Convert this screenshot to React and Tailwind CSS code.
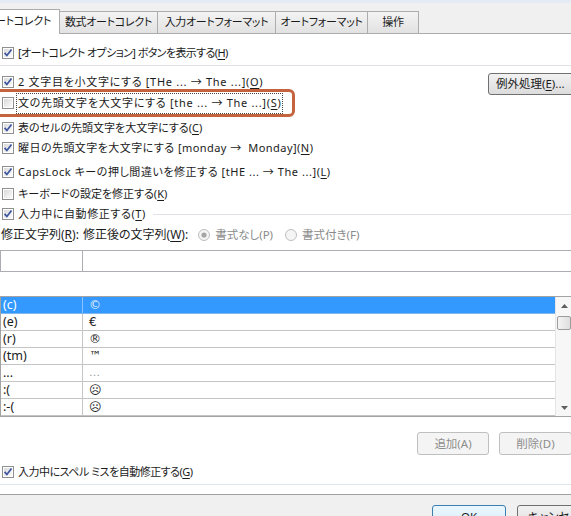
import React from 'react';

const Box = ({ on }) => (
  <svg width="12" height="12" viewBox="0 0 12 12" className="shrink-0">
    <defs>
      <linearGradient id="cbfill" x1="0" y1="0" x2="1" y2="1">
        <stop offset="0" stopColor="#d9d9d9" />
        <stop offset="1" stopColor="#fbfbfb" />
      </linearGradient>
    </defs>
    <rect x="0.5" y="0.5" width="11" height="11" fill="#fff" stroke="#8e8f8f" />
    <rect x="2" y="2" width="8" height="8" fill="url(#cbfill)" />
    {on && <path d="M2.6 5.9 L4.9 8.5 L9.5 2.6" fill="none" stroke="#3b549e" strokeWidth="1.7" />}
  </svg>
);

const Radio = ({ on }) => (
  <svg width="12" height="12" viewBox="0 0 12 12" className="shrink-0">
    <circle cx="6" cy="6" r="5.5" fill="#f5f5f5" stroke="#bdbdbd" />
    {on && <circle cx="6" cy="6" r="2.6" fill="#a6a6a6" />}
  </svg>
);

const K = ({ children }) => <span className="underline underline-offset-2">{children}</span>;

const Opt = ({ on, className = '', t = '', children }) => (
  <div className={`flex items-center gap-[4px] pl-[2px] h-[20px] ${className}`}>
    <Box on={on} />
    <span className={`whitespace-nowrap ${t}`}>{children}</span>
  </div>
);

const Tab = ({ w, children }) => (
  <div
    className={`${w} h-[23px] shrink-0 flex items-center justify-center border-t border-r border-b border-[#acacac] bg-gradient-to-b from-[#f3f3f3] to-[#e2e2e2] whitespace-nowrap`}
  >
    {children}
  </div>
);

const entries = [
  ['(c)', '©'],
  ['(e)', '€'],
  ['(r)', '®'],
  ['(tm)', '™'],
  ['...', '…'],
  [':(', '☹'],
  [':-(', '☹'],
];

const Arrow = ({ down }) => (
  <svg width="7" height="4" viewBox="0 0 7 4">
    <path d={down ? 'M0 0 H7 L3.5 4 Z' : 'M0 4 H7 L3.5 0 Z'} fill="#5f5f5f" />
  </svg>
);

export default function App() {
  return (
    <div className="w-[571px] h-[516px] overflow-hidden bg-white text-[#1b1b1b] text-[11px] font-['Noto_Sans','Noto_Sans_CJK_JP',sans-serif] [font-feature-settings:'palt']">
      {/* tab strip */}
      <div className="h-[34px] bg-[#f0f0f0]">
        <div className="h-[3px] bg-[#e4ebf4]" />
        <div className="flex items-end h-[31px] text-[11px] tracking-[-0.3px]">
          <div className="w-[60px] h-[25px] shrink-0 bg-white border-t border-r border-[#acacac] overflow-hidden flex items-center justify-end pr-[8px] pb-[2px] whitespace-nowrap">
            オートコレクト
          </div>
          <Tab w="w-[98px]">数式オートコレクト</Tab>
          <Tab w="w-[118px]">入力オートフォーマット</Tab>
          <Tab w="w-[92px]">オートフォーマット</Tab>
          <Tab w="w-[51px]">操作</Tab>
          <div className="flex-1 border-b border-[#acacac]" />
        </div>
      </div>

      {/* options panel */}
      <div className="relative w-[576px] pt-[9px]">
        <div className="absolute left-[-6px] top-[55px] w-[301px] h-[28px] border-[3px] border-[#c4643f] rounded-[6px]" />

        <Opt on t="tracking-[-0.6px]">
          [オートコレクト オプション] ボタンを表示する(<K>H</K>)
        </Opt>
        <div className="mt-[2px] h-px bg-[#dfe3e8]" />

        <div className="flex items-center h-[20px] mt-[6px]">
          <div className="flex items-center gap-[4px] pl-[2px]">
            <Box on />
            <span className="whitespace-nowrap tracking-[0.7px]">
              2 文字目を小文字にする [THe ... → The ...](<K>O</K>)
            </span>
          </div>
          <button className="ml-auto mt-[4px] w-[88px] h-[22px] shrink-0 border border-[#707070] rounded-[3px] bg-gradient-to-b from-[#f2f2f2] to-[#dcdcdc] flex items-center pl-[7px] whitespace-nowrap text-[11.5px]">
            例外処理(<K>E</K>)...
          </button>
        </div>

        <div className="flex items-center gap-[3px] pl-[2px] h-[20px] mt-[1px]">
          <Box />
          <span className="whitespace-nowrap h-[19px] flex items-center px-[1px] tracking-[0.7px] outline-1 outline-dotted outline-[#444]">
            文の先頭文字を大文字にする [the ... → The ...](<K>S</K>)
          </span>
        </div>

        <Opt on className="mt-[5px]">
          表のセルの先頭文字を大文字にする(<K>C</K>)
        </Opt>
        <Opt on t="tracking-[0.45px]">
          曜日の先頭文字を大文字にする [monday →&nbsp; Monday](<K>N</K>)
        </Opt>
        <Opt on className="mt-[4px]" t="tracking-[0.55px]">
          CapsLock キーの押し間違いを修正する [tHE ... → The ...](<K>L</K>)
        </Opt>
        <Opt className="mt-[2px]">
          キーボードの設定を修正する(<K>K</K>)
        </Opt>
        <div className="flex items-center gap-[4px] pl-[2px] h-[20px]">
          <Box on />
          <span className="whitespace-nowrap tracking-[0.6px]">
            入力中に自動修正する(<K>T</K>)
          </span>
          <div className="flex-1 h-px bg-[#dfe3e8] ml-[3px] mt-[1px]" />
        </div>

        {/* replace / with row */}
        <div className="flex items-center h-[20px] mt-[1px] whitespace-nowrap text-[12px]">
          <span className="w-[83px] pl-[1px]">
            修正文字列(<K>R</K>):
          </span>
          <span>
            修正後の文字列(<K>W</K>):
          </span>
          <div className="flex items-center gap-[5px] ml-[10px] text-[#8a8a8a] text-[11.5px]">
            <Radio on />
            <span>書式なし(P)</span>
          </div>
          <div className="flex items-center gap-[5px] ml-[12px] text-[#8a8a8a] text-[11.5px]">
            <Radio />
            <span>書式付き(F)</span>
          </div>
        </div>

        <div className="flex h-[22px] mt-[5px]">
          <div className="w-[83px] border border-[#abadb3]" />
          <div className="flex-1 border border-l-0 border-[#abadb3]" />
        </div>

        {/* entries list */}
        <div className="flex w-[573px] mt-[24px] border border-[#a3a3a3] text-[12.5px] leading-[16px] [font-feature-settings:normal]">
          <div className="flex-1">
            {entries.map(([a, b], i) => (
              <div
                key={i}
                className={`flex h-[17px] border-b ${
                  i === 0 ? 'bg-[#3399ff] text-white border-[#7fb8f0]' : 'border-[#c4c4c4]'
                }`}
              >
                <div
                  className={`w-[82px] h-[16px] pl-[2px] overflow-hidden border-r ${
                    i === 0 ? 'border-[#8cc3fa]' : 'border-[#c4c4c4]'
                  }`}
                >
                  {a}
                </div>
                <div
                  className={`h-[16px] pl-[6px] overflow-hidden ${
                    i === 0 ? 'text-[#e8f2ff] text-[12px]' : i === 4 ? 'text-[#9a9a9a] text-[11px]' : 'text-[12px]'
                  } font-['DejaVu_Sans',sans-serif]`}
                >
                  {b}
                </div>
              </div>
            ))}
          </div>
          <div className="w-[17px] bg-[#f7f7f7] border-l border-[#e6e6e6] flex flex-col items-center">
            <div className="h-[17px] flex items-center justify-center">
              <Arrow />
            </div>
            <div className="mt-[2px] w-[14px] h-[14px] border border-[#9c9c9c] rounded-[2px] bg-gradient-to-r from-[#f4f4f4] to-[#dedede]" />
            <div className="flex-1" />
            <div className="h-[17px] flex items-center justify-center">
              <Arrow down />
            </div>
          </div>
        </div>

        <div className="flex justify-end gap-[10px] pr-[4px] mt-[15px] text-[#8d8d8d] text-[11.5px]">
          <div className="w-[72px] h-[23px] border border-[#bfbfbf] rounded-[3px] bg-[#f4f4f4] flex items-center justify-center">
            追加(A)
          </div>
          <div className="w-[73px] h-[23px] border border-[#bfbfbf] rounded-[3px] bg-[#f4f4f4] flex items-center justify-center">
            削除(D)
          </div>
        </div>

        <Opt on className="mt-[7px]" t="tracking-[-0.5px]">
          入力中にスペル ミスを自動修正する(<K>G</K>)
        </Opt>
        <div className="mt-[2px] h-px bg-[#dfe6ee]" />
      </div>

      {/* dialog buttons */}
      <div className="mt-[9px] h-[30px] bg-[#f0f0f0] border-t border-[#a0a0a0] flex gap-[11px] pl-[432px] pt-[10px] text-[11.5px]">
        <div className="w-[74px] h-[23px] shrink-0 border border-[#3c7fb1] rounded-[3px] bg-gradient-to-b from-[#eaf6fd] to-[#d9eefa] flex items-center justify-center">
          OK
        </div>
        <div className="w-[74px] h-[23px] shrink-0 border border-[#707070] rounded-[3px] bg-gradient-to-b from-[#f2f2f2] to-[#dcdcdc] flex items-center justify-center whitespace-nowrap">
          キャンセル
        </div>
      </div>
    </div>
  );
}
